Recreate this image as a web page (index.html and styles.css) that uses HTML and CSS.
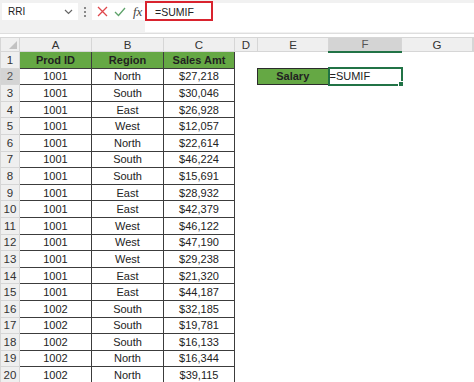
FILE: index.html
```html
<!doctype html>
<html lang="en">
<head>
  <meta charset="utf-8">
  <title>SUMIF</title>
  <link rel="stylesheet" href="styles.css">
</head>
<body>

<div class="toolbar">
  <div class="namebox">
    <span>RRI</span>
    <svg width="9" height="6" viewBox="0 0 9 6"><path d="M1 1 L4.5 4.5 L8 1" fill="none" stroke="#666" stroke-width="1.2"/></svg>
  </div>
  <div class="dots"><i></i><i></i><i></i></div>
  <div class="buttons">
    <svg width="11" height="11" viewBox="0 0 11 11"><path d="M1 1 L10 10 M10 1 L1 10" stroke="#e0474c" stroke-width="1.3"/></svg>
    <svg width="12" height="10" viewBox="0 0 12 10"><path d="M1 5 L4.5 8.5 L11 1" fill="none" stroke="#5ea36a" stroke-width="1.3"/></svg>
    <span class="fx">fx</span>
  </div>
  <div class="input">
    <div class="editing">=SUMIF</div>
  </div>
</div>
<div class="divider"></div>

<table class="sheet">
  <colgroup>
    <col class="c-hdr"><col class="c-a"><col class="c-b"><col class="c-c"><col class="c-d"><col class="c-e"><col class="c-f"><col class="c-g"><col>
  </colgroup>
  <tr class="colhead">
    <th class="corner"><span class="tri"></span></th>
    <th>A</th><th>B</th><th>C</th><th>D</th><th>E</th><th class="sel">F</th><th>G</th><th class="rest"></th>
  </tr>
  <tr>
    <th>1</th>
    <td class="hd">Prod ID</td><td class="hd">Region</td><td class="hd">Sales Amt</td>
    <td></td><td></td><td></td><td></td><td></td>
  </tr>
  <tr>
    <th class="sel">2</th>
    <td class="d">1001</td><td class="d">North</td><td class="d">$27,218</td>
    <td></td><td class="hd salary">Salary</td><td class="active">=SUMIF<span class="handle"></span></td><td></td><td></td>
  </tr>
  <tr><th>3</th><td class="d">1001</td><td class="d">South</td><td class="d">$30,046</td><td></td><td></td><td></td><td></td><td></td></tr>
  <tr><th>4</th><td class="d">1001</td><td class="d">East</td><td class="d">$26,928</td><td></td><td></td><td></td><td></td><td></td></tr>
  <tr><th>5</th><td class="d">1001</td><td class="d">West</td><td class="d">$12,057</td><td></td><td></td><td></td><td></td><td></td></tr>
  <tr><th>6</th><td class="d">1001</td><td class="d">North</td><td class="d">$22,614</td><td></td><td></td><td></td><td></td><td></td></tr>
  <tr><th>7</th><td class="d">1001</td><td class="d">South</td><td class="d">$46,224</td><td></td><td></td><td></td><td></td><td></td></tr>
  <tr><th>8</th><td class="d">1001</td><td class="d">South</td><td class="d">$15,691</td><td></td><td></td><td></td><td></td><td></td></tr>
  <tr><th>9</th><td class="d">1001</td><td class="d">East</td><td class="d">$28,932</td><td></td><td></td><td></td><td></td><td></td></tr>
  <tr><th>10</th><td class="d">1001</td><td class="d">East</td><td class="d">$42,379</td><td></td><td></td><td></td><td></td><td></td></tr>
  <tr><th>11</th><td class="d">1001</td><td class="d">West</td><td class="d">$46,122</td><td></td><td></td><td></td><td></td><td></td></tr>
  <tr><th>12</th><td class="d">1001</td><td class="d">West</td><td class="d">$47,190</td><td></td><td></td><td></td><td></td><td></td></tr>
  <tr><th>13</th><td class="d">1001</td><td class="d">West</td><td class="d">$29,238</td><td></td><td></td><td></td><td></td><td></td></tr>
  <tr><th>14</th><td class="d">1001</td><td class="d">East</td><td class="d">$21,320</td><td></td><td></td><td></td><td></td><td></td></tr>
  <tr><th>15</th><td class="d">1001</td><td class="d">East</td><td class="d">$44,187</td><td></td><td></td><td></td><td></td><td></td></tr>
  <tr><th>16</th><td class="d">1002</td><td class="d">South</td><td class="d">$32,185</td><td></td><td></td><td></td><td></td><td></td></tr>
  <tr><th>17</th><td class="d">1002</td><td class="d">South</td><td class="d">$19,781</td><td></td><td></td><td></td><td></td><td></td></tr>
  <tr><th>18</th><td class="d">1002</td><td class="d">South</td><td class="d">$16,133</td><td></td><td></td><td></td><td></td><td></td></tr>
  <tr><th>19</th><td class="d">1002</td><td class="d">North</td><td class="d">$16,344</td><td></td><td></td><td></td><td></td><td></td></tr>
  <tr><th>20</th><td class="d">1002</td><td class="d">North</td><td class="d">$39,115</td><td></td><td></td><td></td><td></td><td></td></tr>
</table>

</body>
</html>
```

FILE: styles.css
```css
body {
    margin: 0;
    font-family: "Liberation Sans", Arial, sans-serif;
    background: #fff;
    overflow: hidden;
}

/* formula bar */
.toolbar {
    display: flex;
    align-items: flex-start;
    height: 33px;
    background: #f1f1f1;
    padding-top: 3px;
    box-sizing: border-box;
}
.namebox {
    width: 76px;
    height: 17px;
    margin-left: 2px;
    background: #fff;
    display: flex;
    align-items: center;
    justify-content: space-between;
    padding: 0 5px 0 6px;
    box-sizing: border-box;
    font-size: 10px;
    color: #222;
}
.dots {
    width: 14px;
    height: 17px;
    display: flex;
    flex-direction: column;
    align-items: center;
    justify-content: center;
    gap: 2px;
}
.dots i {
    width: 2px;
    height: 2px;
    background: #666;
    border-radius: 50%;
}
.buttons {
    width: 53px;
    height: 17px;
    background: #fff;
    display: flex;
    align-items: center;
    gap: 6px;
    padding-left: 5px;
    box-sizing: border-box;
}
.fx {
    font-family: "Liberation Serif", serif;
    font-style: italic;
    font-size: 13px;
    color: #444;
    margin-left: 1px;
}
.input {
    flex: 1;
    height: 29px;
    background: #fff;
}
.editing {
    width: 68px;
    height: 20px;
    margin-top: -2px;
    border: 2px solid #d9232e;
    box-sizing: border-box;
    font-size: 10.5px;
    color: #222;
    padding: 3px 0 0 8px;
}
.divider {
    height: 1px;
    background: #dedede;
    margin-bottom: 3px;
}

/* grid */
table.sheet {
    border-collapse: collapse;
    table-layout: fixed;
    width: 474px;
}
col.c-hdr { width: 19px; }
col.c-a { width: 72px; }
col.c-b { width: 72px; }
col.c-c { width: 71px; }
col.c-d { width: 23px; }
col.c-e { width: 71px; }
col.c-f { width: 73px; }
col.c-g { width: 71px; }

table.sheet tr {
    height: 16.6px;
}
table.sheet th {
    background: #efefef;
    font-weight: normal;
    font-size: 11.5px;
    color: #333;
    border: 1px solid #d6d6d6;
    padding: 0;
    text-align: center;
}
table.sheet tr.colhead {
    height: 14px;
}
table.sheet th.sel {
    background: #d4d4d4;
    color: #555;
}
tr.colhead th.sel {
    border-bottom: 2px solid #217346;
}
th.corner {
    position: relative;
}
.tri {
    position: absolute;
    right: 2px;
    bottom: 2px;
    width: 0;
    height: 0;
    border-left: 8px solid transparent;
    border-bottom: 8px solid #c2c2c2;
}
th.rest {
    border-right: none;
}
table.sheet td {
    padding: 0;
    font-size: 11px;
    color: #222;
    white-space: nowrap;
}
td.d {
    text-align: center;
    border: 1px solid #3c3c3c;
}
td.hd {
    background: #65a844;
    font-weight: bold;
    font-size: 11px;
    color: #111;
    text-align: center;
    border: 1px solid #3c3c3c;
}
td.salary {
    border: 1px solid #2b2b2b;
}
td.active {
    position: relative;
    border: 2px solid #217346;
    padding-left: 1px;
    font-size: 11px;
}
.handle {
    position: absolute;
    right: -3px;
    bottom: -3px;
    width: 4px;
    height: 4px;
    background: #217346;
    border: 1px solid #fff;
}
```
